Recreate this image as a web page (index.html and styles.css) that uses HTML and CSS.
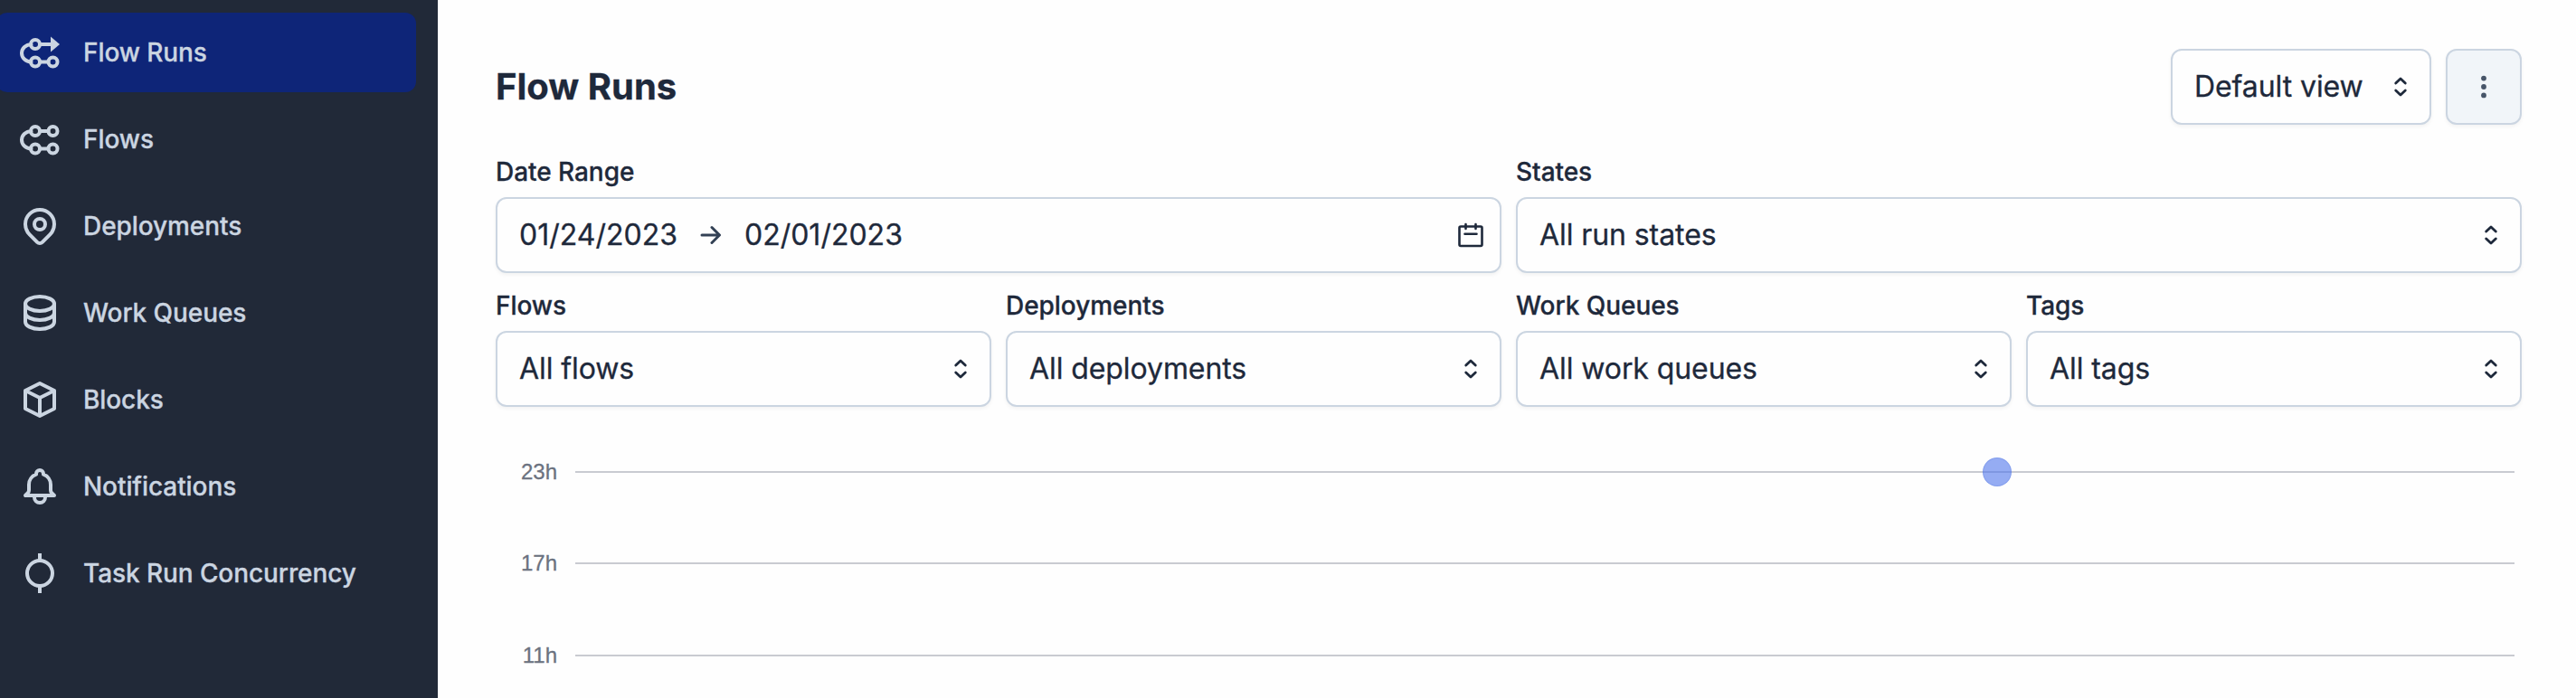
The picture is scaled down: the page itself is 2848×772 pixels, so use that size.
FILE: index.html
```html
<!DOCTYPE html>
<html lang="en">
<head>
<meta charset="utf-8">
<title>Flow Runs</title>
<link rel="stylesheet" href="styles.css">
</head>
<body>
<svg class="sprite" aria-hidden="true">
  <symbol id="updown" viewBox="0 0 24 24"><path d="M6.700 8 12 2.900 17.300 8M6.700 16l5.300 5.100 5.300-5.100"/></symbol>
</svg>
<div class="app">
  <nav class="sidebar">
    <a class="nav-item nav-item--active">
      <svg class="nav-icon" viewBox="0 0 48 48"><circle cx="19" cy="15" r="5"/><circle cx="19" cy="34.500" r="5"/><circle cx="38.500" cy="34.500" r="5"/><path d="M24 15h12M24 34.500h9.500M14.500 15.200C8.500 15.200 4 19.500 4 24.800s4.500 9.600 10.500 9.600"/><path class="solid" d="M36 6.500 46 15l-10 8.500z"/></svg>
      <span>Flow Runs</span></a>
    <a class="nav-item">
      <svg class="nav-icon" viewBox="0 0 48 48"><circle cx="19" cy="15" r="5"/><circle cx="38.500" cy="15" r="5"/><circle cx="19" cy="34.500" r="5"/><circle cx="38.500" cy="34.500" r="5"/><path d="M24 15h9.500M24 34.500h9.500M14.500 15.200C8.500 15.200 4 19.500 4 24.800s4.500 9.600 10.500 9.600"/></svg>
      <span>Flows</span></a>
    <a class="nav-item">
      <svg class="nav-icon" viewBox="0 0 48 48"><path d="M35.300 33.300 26.800 41.800a4 4 0 0 1-5.660 0L12.700 33.300a16 16 0 1 1 22.600 0z"/><circle cx="24" cy="22" r="6"/></svg>
      <span>Deployments</span></a>
    <a class="nav-item">
      <svg class="nav-icon" viewBox="0 0 48 48"><ellipse cx="24" cy="14" rx="16" ry="8"/><path d="M8 14v20c0 4.400 7.200 8 16 8s16-3.600 16-8V14M8 24c0 4.400 7.200 8 16 8s16-3.600 16-8"/></svg>
      <span>Work Queues</span></a>
    <a class="nav-item">
      <svg class="nav-icon" viewBox="0 0 48 48"><path d="M40 14 24 6 8 14v20l16 8 16-8zM8 14l16 8 16-8M24 22v20"/></svg>
      <span>Blocks</span></a>
    <a class="nav-item">
      <svg class="nav-icon" viewBox="0 0 48 48"><path d="M30 34h10l-2.800-2.800A4 4 0 0 1 36 28.300V22a12 12 0 0 0-8-11.300V10a4 4 0 1 0-8 0v.7A12 12 0 0 0 12 22v6.300a4 4 0 0 1-1.200 2.900L8 34h10m12 0v2a6 6 0 1 1-12 0v-2m12 0H18"/></svg>
      <span>Notifications</span></a>
    <a class="nav-item">
      <svg class="nav-icon" viewBox="0 0 48 48"><circle cx="24" cy="24" r="14"/><path class="butt" d="M24 2v8M24 38v8"/></svg>
      <span>Task Run Concurrency</span></a>
  </nav>
  <main class="main">
    <header class="header">
      <h1 class="title">Flow Runs</h1>
      <div class="header-actions">
        <div class="control view-select"><span>Default view</span><svg class="chevrons"><use href="#updown"/></svg></div>
        <button class="control menu-button" aria-label="More"><svg class="dots" viewBox="0 0 6 26"><circle cx="3" cy="3.600" r="2.900"/><circle cx="3" cy="13" r="2.900"/><circle cx="3" cy="22.400" r="2.900"/></svg></button>
      </div>
    </header>
    <section class="filters">
      <div class="field field--wide">
        <label class="label">Date Range</label>
        <div class="control">
          <span class="dates"><span>01/24/2023</span><svg class="arrow" viewBox="0 0 24 22"><path d="M2 11h19M13 2.500 21.500 11 13 19.500"/></svg><span>02/01/2023</span></span>
          <svg class="calendar" viewBox="0 0 28 30"><rect x="1.500" y="5.500" width="25" height="21.500" rx="1.500"/><path d="M8.500 3v5M19.500 3v5M7.500 13.700h13"/></svg>
        </div>
      </div>
      <div class="field field--wide">
        <label class="label">States</label>
        <div class="control"><span>All run states</span><svg class="chevrons"><use href="#updown"/></svg></div>
      </div>
      <div class="field">
        <label class="label">Flows</label>
        <div class="control"><span>All flows</span><svg class="chevrons"><use href="#updown"/></svg></div>
      </div>
      <div class="field">
        <label class="label">Deployments</label>
        <div class="control"><span>All deployments</span><svg class="chevrons"><use href="#updown"/></svg></div>
      </div>
      <div class="field">
        <label class="label">Work Queues</label>
        <div class="control"><span>All work queues</span><svg class="chevrons"><use href="#updown"/></svg></div>
      </div>
      <div class="field">
        <label class="label">Tags</label>
        <div class="control"><span>All tags</span><svg class="chevrons"><use href="#updown"/></svg></div>
      </div>
    </section>
    <section class="chart">
      <div class="tick"><span class="tick-label">23h</span><div class="gridline"><span class="run-dot" style="left:73.32%"></span></div></div>
      <div class="tick"><span class="tick-label">17h</span><div class="gridline"></div></div>
      <div class="tick"><span class="tick-label">11h</span><div class="gridline"></div></div>
    </section>
  </main>
</div>
</body>
</html>
```

FILE: styles.css
```css
* { box-sizing: border-box; }

body {
  margin: 0;
  font-family: Inter, "Liberation Sans", sans-serif;
  color: #1e293b;
  background: #fefefe;
  -webkit-text-stroke: 0.3px currentColor;
}

svg {
  fill: none;
  stroke: currentColor;
  stroke-linecap: round;
  stroke-linejoin: round;
  flex: none;
}

.sprite { display: none; }

.app {
  display: flex;
  height: 772px;
  overflow: hidden;
}

.sidebar {
  display: flex;
  flex-direction: column;
  gap: 8px;
  flex: none;
  width: 484px;
  padding: 14px 24px 0 0;
  background: #212938;
  color: #cbd5e1;
}

.nav-item {
  display: flex;
  align-items: center;
  gap: 24px;
  height: 88px;
  margin-left: -4px;
  padding-left: 24px;
  border-radius: 12px;
  font-size: 28px;
  font-weight: 500;
  line-height: 40px;
  letter-spacing: -0.08px;
}

.nav-item--active { background: #0e2578; }

.nav-icon {
  width: 48px;
  height: 48px;
  stroke-width: 4;
}

.nav-icon .solid { fill: currentColor; stroke: none; }
.nav-icon .butt { stroke-linecap: butt; }

.main {
  flex: 1;
  padding: 54px 60px 0 64px;
}

.header {
  display: flex;
  align-items: center;
  justify-content: space-between;
  height: 84px;
}

.title {
  margin: 0;
  font-size: 40px;
  font-weight: 700;
  line-height: 56px;
}

.header-actions { display: flex; gap: 16px; }

.control {
  display: flex;
  align-items: center;
  justify-content: space-between;
  height: 84px;
  padding: 0 24px;
  border: 2px solid #cbd5e1;
  border-radius: 12px;
  background: #fefefe;
  box-shadow: 0 2px 4px rgba(0, 0, 0, 0.05);
  color: #1e293b;
  font-size: 32px;
  line-height: 48px;
  letter-spacing: -0.08px;
}

.view-select { width: 288px; }

.menu-button {
  justify-content: center;
  width: 84px;
  padding: 0;
  background: #f1f5f9;
  color: #475569;
}

.dots { width: 6px; height: 26px; fill: currentColor; stroke: none; }

.chevrons {
  width: 24px;
  height: 24px;
  margin-right: -4px;
  stroke-width: 2.800;
}

.filters {
  display: grid;
  grid-template-columns: repeat(4, 1fr);
  gap: 16px;
  margin-top: 32px;
}

.field--wide { grid-column: span 2; }

.label {
  display: block;
  margin-bottom: 8px;
  font-size: 28px;
  font-weight: 500;
  line-height: 40px;
  letter-spacing: -0.05px;
}

.dates { display: flex; align-items: center; gap: 25px; letter-spacing: 0; }
.arrow { width: 24px; height: 22px; stroke-width: 3; color: #334155; }
.calendar { width: 28px; height: 30px; margin-right: -6px; stroke-width: 2.600; }

.chart { padding: 21px 8px 0 0; }

.tick {
  display: flex;
  align-items: center;
  gap: 20px;
  height: 101.500px;
}

.tick-label {
  width: 68px;
  color: #6b7280;
  font-family: "Liberation Sans", sans-serif;
  font-size: 24px;
  text-align: right;
}

.gridline {
  position: relative;
  flex: 1;
  height: 2px;
  background: #c9cbd1;
}

.run-dot {
  position: absolute;
  top: -15px;
  width: 32px;
  height: 32px;
  margin-left: -16px;
  border: 1px solid rgba(79, 117, 220, 0.25);
  border-radius: 50%;
  background: rgba(79, 117, 235, 0.6);
}
```
